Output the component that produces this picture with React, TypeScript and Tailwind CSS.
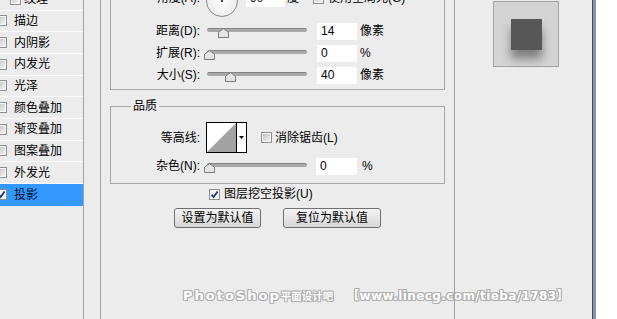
import React from "react";

function Check({ checked }: { checked?: boolean }) {
  return (
    <span className="inline-flex items-center justify-center w-[11px] h-[11px] shrink-0 border border-[#8f8f8f] bg-[#f7f7f7]">
      {checked ? (
        <svg width="9" height="9" viewBox="0 0 9 9">
          <path d="M1.5 4.6 L3.6 7 L7.6 1.4" fill="none" stroke="#1d3a78" strokeWidth="1.8" />
        </svg>
      ) : (
        <span className="w-[7px] h-[7px] bg-linear-to-br from-[#c4c4c4] to-[#f3f3f3]" />
      )}
    </span>
  );
}

function Slider({ thumb }: { thumb: number }) {
  return (
    <div className="relative w-[100px] h-[14px] shrink-0">
      <div className="absolute left-0 right-0 top-[4px] h-[4px] rounded-full bg-[#a9a9a9] border-t border-[#858585]" />
      <svg className="absolute top-[4px]" style={{ left: thumb }} width="11" height="10" viewBox="0 0 11 10">
        <path d="M0.5 9.5 V4.2 L5.5 0.6 L10.5 4.2 V9.5 Z" fill="#e4e4e4" stroke="#7b7b7b" />
      </svg>
    </div>
  );
}

function Label({ children, cls = "" }: { children: React.ReactNode; cls?: string }) {
  return <span className={"w-[89px] shrink-0 text-right whitespace-nowrap " + cls}>{children}</span>;
}

function Field({ value, cls = "" }: { value: string; cls?: string }) {
  return (
    <span className={"h-[17px] bg-white pl-[4px] leading-[17px] shrink-0 " + cls}>{value}</span>
  );
}

function SliderRow({ label, thumb, value, unit }: { label: string; thumb: number; value: string; unit: string }) {
  return (
    <div className="flex items-center h-[22px]">
      <Label>{label}</Label>
      <div className="ml-[7px]">
        <Slider thumb={thumb} />
      </div>
      <Field value={value} cls="ml-[10px] w-[40px]" />
      <span className="ml-[3px] whitespace-nowrap">{unit}</span>
    </div>
  );
}

const leftItems = ["描边", "内阴影", "内发光", "光泽", "颜色叠加", "渐变叠加", "图案叠加", "外发光"];

function LeftPanel() {
  return (
    <div className="w-[84px] h-full shrink-0 border-r border-[#a3a3a3] flex flex-col">
      <div className="-mt-[11px] h-[21.67px] shrink-0 border-b border-[#fafafa] flex items-center pl-[10px]">
        <Check />
        <span className="ml-[3px] whitespace-nowrap">纹理</span>
      </div>
      {leftItems.map((t) => (
        <div key={t} className="h-[21.67px] shrink-0 border-b border-[#fafafa] flex items-center">
          <span className="-ml-[4px] flex">
            <Check />
          </span>
          <span className="ml-[7px] whitespace-nowrap">{t}</span>
        </div>
      ))}
      <div className="h-[22px] shrink-0 bg-[#3399ff] flex items-center">
        <span className="-ml-[4px] flex">
          <Check checked />
        </span>
        <span className="ml-[7px] whitespace-nowrap text-[#0a1030]">投影</span>
      </div>
    </div>
  );
}

function Main() {
  return (
    <div className="ml-[16px] w-[355px] h-full shrink-0 border-x border-[#a3a3a3] flex flex-col pl-[9px]">
      {/* Structure group */}
      <div className="-mt-[30px] w-[335px] border border-[#a8a8a8] pt-[13px] pb-[3px] flex flex-col">
        <div className="flex items-center h-[34px]">
          <Label cls="mb-[6px]">角度(A):</Label>
          <div className="relative ml-[6px] w-[32px] h-[32px] shrink-0 rounded-full border border-[#8a8a8a] bg-radial from-white to-[#e6e6e6] flex items-center justify-center">
            <span className="absolute left-[14.5px] top-0 w-px h-[15px] bg-[#555]" />
            <span className="w-[2px] h-[2px] bg-[#333]" />
          </div>
          <Field value="90" cls="ml-[8px] w-[39px] mb-[6px]" />
          <span className="ml-[2px] mb-[6px]">度</span>
          <span className="ml-[14px] mb-[6px] flex">
            <Check />
          </span>
          <span className="ml-[4px] mb-[6px] whitespace-nowrap">使用全局光(G)</span>
        </div>
        <div className="mt-[2px]">
          <SliderRow label="距离(D):" thumb={11} value="14" unit="像素" />
        </div>
        <SliderRow label="扩展(R):" thumb={-3} value="0" unit="%" />
        <SliderRow label="大小(S):" thumb={18} value="40" unit="像素" />
      </div>

      {/* Quality group */}
      <div className="relative mt-[16px] w-[335px] border border-[#a8a8a8] pt-[15px] pb-[6px] flex flex-col">
        <span className="absolute left-[20px] -top-[9px] px-[2px] leading-[16px] bg-[#ececec]">品质</span>
        <div className="flex items-center h-[31px]">
          <Label>等高线:</Label>
          <div className="ml-[6px] h-[31px] flex border border-black shrink-0">
            <svg width="29" height="29" viewBox="0 0 29 29" className="block">
              <rect width="29" height="29" fill="#ffffff" />
              <polygon points="0,29 29,0 29,29" fill="#a2a2a2" />
            </svg>
            <div className="w-[10px] border-l border-black bg-white flex items-center justify-center">
              <svg width="5" height="3" viewBox="0 0 5 3">
                <polygon points="0,0 5,0 2.5,3" fill="#000" />
              </svg>
            </div>
          </div>
          <span className="ml-[14px] flex">
            <Check />
          </span>
          <span className="ml-[3px] whitespace-nowrap">消除锯齿(L)</span>
        </div>
        <div className="mt-[2px] flex items-center h-[22px]">
          <Label>杂色(N):</Label>
          <div className="ml-[7px]">
            <Slider thumb={-3} />
          </div>
          <Field value="0" cls="ml-[9px] w-[41px]" />
          <span className="ml-[5px]">%</span>
        </div>
      </div>

      <div className="h-[19px] flex items-center pl-[99px] pt-[1px]">
        <Check checked />
        <span className="ml-[4px] whitespace-nowrap">图层挖空投影(U)</span>
      </div>
      <div className="mt-[5px] flex pl-[64px]">
        <button className="w-[87px] h-[20px] rounded-[3px] border border-[#707070] bg-linear-to-b from-[#f6f6f6] to-[#d6d6d6] leading-[18px]">
          设置为默认值
        </button>
        <button className="ml-[22px] w-[98px] h-[20px] rounded-[3px] border border-[#707070] bg-linear-to-b from-[#f6f6f6] to-[#d6d6d6] leading-[18px]">
          复位为默认值
        </button>
      </div>
    </div>
  );
}

function Right() {
  return (
    <div className="w-[137px] h-full shrink-0 flex flex-col">
      <div className="ml-[38px] mt-[1px] w-[66px] h-[66px] border border-[#a2a2a2] bg-[#d4d4d4] flex items-center justify-center">
        <div className="w-[31px] h-[31px] bg-[#575757] shadow-[0_9px_9px_rgba(0,0,0,0.4)]" />
      </div>
    </div>
  );
}

export default function App() {
  return (
    <div className="relative w-[617px] h-[319px] overflow-hidden bg-[#ececec] text-[12px] leading-[16px] text-black font-['Liberation_Sans','Noto_Sans_CJK_SC',sans-serif]">
      <div className="absolute left-[183px] top-[288px] flex items-center whitespace-nowrap text-white font-bold [text-shadow:1px_0_#b0b0b0,-1px_0_#b0b0b0,0_1px_#b0b0b0,0_-1px_#b0b0b0,1px_1px_#b0b0b0,-1px_-1px_#b0b0b0,1px_-1px_#b0b0b0,-1px_1px_#b0b0b0]">
        <span className="text-[13px] tracking-[2px] font-['DejaVu_Sans',sans-serif]">PhotoShop</span>
        <span className="text-[10.5px] font-['Noto_Sans_CJK_SC',sans-serif]">平面设计吧</span>
        <span className="ml-[14px] text-[12px] tracking-[0.4px] font-['DejaVu_Sans','Noto_Sans_CJK_SC',sans-serif]">【www.linecg.com/tieba/1783】</span>
      </div>
      <div className="relative z-10 flex h-full">
        <LeftPanel />
        <Main />
        <Right />
        <div className="w-[1px] h-full shrink-0 bg-[#3f4c5c]" />
        <div className="w-[3px] h-full shrink-0 bg-[#8494ad]" />
        <div className="flex-1 h-full bg-white" />
      </div>
    </div>
  );
}
